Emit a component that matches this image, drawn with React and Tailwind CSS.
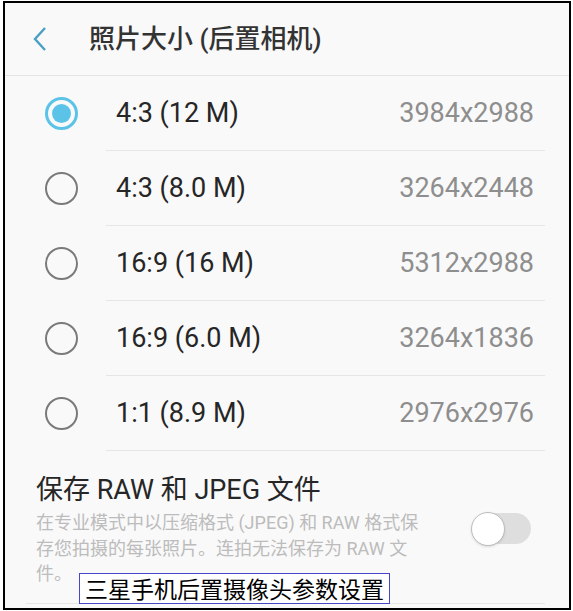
import React from "react";

const sizes = [
  { label: "4:3 (12 M)", value: "3984x2988", checked: true },
  { label: "4:3 (8.0 M)", value: "3264x2448" },
  { label: "16:9 (16 M)", value: "5312x2988" },
  { label: "16:9 (6.0 M)", value: "3264x1836" },
  { label: "1:1 (8.9 M)", value: "2976x2976" },
];

function Radio({ checked }) {
  if (checked) {
    return (
      <div className="flex h-[33px] w-[33px] items-center justify-center rounded-full border-[3px] border-[#5bc3e8]">
        <div className="h-[19px] w-[19px] rounded-full bg-[#5bc3e8]" />
      </div>
    );
  }
  return <div className="h-[33px] w-[33px] rounded-full border-2 border-[#7a7a7a]" />;
}

export default function App() {
  return (
    <div className="h-[611px] w-[573px] bg-white pl-[3px] pt-[1px] font-['Roboto','Noto_Sans_CJK_SC',sans-serif]">
      <div className="relative flex h-[609px] w-[568px] flex-col overflow-hidden border-2 border-black bg-[#f9f9f9]">
        <header className="flex h-[73px] shrink-0 items-center border-b border-[#e4e4e4]">
          <svg className="ml-[27px] mr-[41px]" width="16" height="26" viewBox="0 0 16 26">
            <path d="M13 2 L3 13 L13 24" fill="none" stroke="#4a9fc3" strokeWidth="2.4" />
          </svg>
          <h1 className="text-[26px] font-medium text-[#333]">照片大小 (后置相机)</h1>
        </header>

        <ul>
          {sizes.map((s) => (
            <li key={s.label} className="flex h-[75px] items-center">
              <div className="w-[101px] shrink-0 pl-[40px]">
                <Radio checked={s.checked} />
              </div>
              <div className="mr-[24px] flex h-full flex-1 items-center justify-between border-b border-[#e6e6e6] pl-[10px] pr-[11px]">
                <span className="text-[27px] text-[#262626]">{s.label}</span>
                <span className="text-[27px] text-[#8e8e8e]">{s.value}</span>
              </div>
            </li>
          ))}
        </ul>

        <section className="ml-[21px] mr-[24px] flex border-b border-[#e6e6e6] pb-[16px] pl-[10px] pt-[22px]">
          <div className="w-[395px]">
            <div className="text-[27px] leading-[34px] text-[#262626]">保存 RAW 和 JPEG 文件</div>
            <p className="mt-[3px] text-[18px] leading-[25.5px] text-[#bcbcbc]">
              在专业模式中以压缩格式 (JPEG) 和 RAW 格式保存您拍摄的每张照片。连拍无法保存为 RAW 文件。
            </p>
          </div>
          <div className="relative ml-[50px] mt-[40px] h-[31px] w-[50px] shrink-0 rounded-full bg-[#dedede]">
            <div className="absolute -left-[10px] -top-[1px] h-[34px] w-[34px] rounded-full border border-[#bdbdbd] bg-white shadow-sm" />
          </div>
        </section>

        <div className="absolute left-[74px] top-[570px] border border-[#4646c8] bg-white px-[5px] font-['Noto_Sans_CJK_SC',sans-serif] text-[23px] leading-[29px] text-black">
          三星手机后置摄像头参数设置
        </div>
      </div>
    </div>
  );
}
